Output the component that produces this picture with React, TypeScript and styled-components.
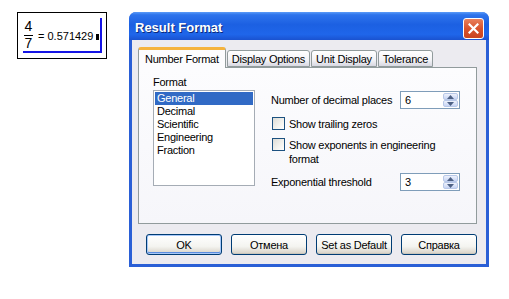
import React from "react";
import styled, { createGlobalStyle } from "styled-components";

const GlobalStyle = createGlobalStyle`
  body {
    margin: 0;
    background: #ffffff;
    font-family: "Liberation Sans", Arial, sans-serif;
    font-size: 11px;
    letter-spacing: -0.25px;
    color: #000000;
  }
`;

const Page = styled.div`
  display: flex;
  align-items: flex-start;
  gap: 22px;
  padding: 12px 0 0 17px;
`;

/* ---------- worksheet expression ---------- */

const ExprBox = styled.div`
  flex: none;
  width: 90px;
  height: 47px;
  border: 1px solid #000000;
  padding: 5px 0 0 5px;
  box-sizing: border-box;
`;

const ExprSelection = styled.div`
  display: flex;
  align-items: center;
  width: 79px;
  height: 35px;
  padding: 1px 0 0 1px;
  box-sizing: border-box;
  border-right: 2px solid #1414e6;
  border-bottom: 2px solid #1414e6;
  font-size: 11px;
  letter-spacing: 0;
  white-space: nowrap;
`;

const Fraction = styled.div`
  flex: none;
  display: flex;
  flex-direction: column;
  align-items: center;
  font-size: 14px;
  line-height: 15px;
  margin-right: 5px;
`;

const FracLine = styled.div`
  width: 9px;
  height: 1px;
  background: #000000;
  margin: 1px 0 0;
`;

const Equation = styled.span`
  margin-top: 2px;
`;

const Cursor = styled.span`
  flex: none;
  display: inline-block;
  width: 3px;
  height: 6px;
  background: #000000;
  margin-left: 3px;
  margin-top: 4px;
`;

/* ---------- dialog window ---------- */

const Window = styled.div`
  width: 360px;
  height: 255px;
  display: flex;
  flex-direction: column;
  background: #2a5fd6;
  border-radius: 7px 7px 0 0;
  box-sizing: border-box;
`;

const TitleBar = styled.div`
  height: 28px;
  flex: none;
  display: flex;
  align-items: center;
  justify-content: space-between;
  padding: 0 5px 0 6px;
  border-radius: 7px 7px 0 0;
  background: linear-gradient(
    180deg,
    #5c9cf8 0%,
    #2e74ec 10%,
    #1c60e2 45%,
    #1f66ea 80%,
    #1a52d0 100%
  );
`;

const Title = styled.span`
  color: #ffffff;
  font-weight: bold;
  font-size: 13px;
  letter-spacing: 0;
  text-shadow: 1px 1px 0 #0b2a7a;
  margin-top: 2px;
`;

const CloseButton = styled.div`
  width: 21px;
  height: 21px;
  box-sizing: border-box;
  border: 1px solid #ffffff;
  border-radius: 3px;
  background: linear-gradient(180deg, #e9805c 0%, #d9532d 50%, #c9431f 100%);
  display: flex;
  align-items: center;
  justify-content: center;
  margin-top: 4px;
`;

const Body = styled.div`
  flex: 1;
  margin: 0 3px 3px 3px;
  background: #ecebf0;
  display: flex;
  flex-direction: column;
  padding: 8px 9px 0 6px;
`;

const TabStrip = styled.div`
  display: flex;
  align-items: flex-end;
  height: 20px;
  position: relative;
  z-index: 1;
  margin-bottom: -1px;
`;

const Tab = styled.div<{ $active?: boolean }>`
  box-sizing: border-box;
  height: ${(p) => (p.$active ? "21px" : "17px")};
  padding: 0 ${(p) => (p.$active ? "6px" : "4px")};
  margin-right: 1px;
  display: flex;
  align-items: center;
  border: 1px solid #919b9c;
  border-bottom: ${(p) => (p.$active ? "none" : "1px solid #919b9c")};
  border-radius: 3px 3px 0 0;
  background: ${(p) =>
    p.$active
      ? "#fcfcfe"
      : "linear-gradient(180deg, #ffffff 0%, #f3f3f6 60%, #d8d8e2 100%)"};
  border-top: ${(p) => (p.$active ? "3px solid #f5b33d" : "1px solid #919b9c")};
  white-space: nowrap;
  margin-bottom: ${(p) => (p.$active ? "0" : "1px")};
`;

const Panel = styled.div`
  height: 157px;
  box-sizing: border-box;
  border: 1px solid #919b9c;
  background: linear-gradient(180deg, #fcfcfe 0%, #f6f6fa 100%);
  display: flex;
  padding: 7px 0 0 14px;
`;

const FormatColumn = styled.div`
  display: flex;
  flex-direction: column;
  width: 104px;
`;

const GroupLabel = styled.div`
  height: 14px;
  line-height: 14px;
  margin-bottom: 1px;
`;

const ListBox = styled.div`
  width: 102px;
  height: 96px;
  box-sizing: border-box;
  border: 1px solid #a5acb5;
  background: #ffffff;
  padding: 1px;
`;

const ListItem = styled.div<{ $selected?: boolean }>`
  height: 13px;
  line-height: 13px;
  padding-left: 2px;
  background: ${(p) => (p.$selected ? "#316ac5" : "transparent")};
  color: ${(p) => (p.$selected ? "#ffffff" : "#000000")};
`;

const Options = styled.div`
  display: flex;
  flex-direction: column;
  margin-left: 14px;
  padding-top: 16px;
  width: 190px;
`;

const FieldRow = styled.div<{ $mt?: number }>`
  display: flex;
  align-items: center;
  justify-content: space-between;
  height: 18px;
  margin-top: ${(p) => p.$mt ?? 0}px;
  padding-right: 1px;
`;

const SpinBox = styled.div`
  width: 60px;
  height: 18px;
  box-sizing: border-box;
  border: 1px solid #7f9db9;
  background: #ffffff;
  display: flex;
  align-items: center;
  justify-content: space-between;
  padding: 0 1px 0 4px;
`;

const SpinButtons = styled.div`
  display: flex;
  flex-direction: column;
  width: 15px;
  height: 14px;
`;

const SpinHalf = styled.div`
  flex: 1;
  box-sizing: border-box;
  border: 1px solid #b8c8e8;
  border-radius: 2px;
  background: linear-gradient(180deg, #eef2fc 0%, #c6d4f4 100%);
  display: flex;
  align-items: center;
  justify-content: center;
`;

const CheckRow = styled.div<{ $mt?: number }>`
  display: flex;
  align-items: flex-start;
  margin-top: ${(p) => p.$mt ?? 0}px;
  line-height: 14px;
`;

const CheckBox = styled.div`
  flex: none;
  width: 13px;
  height: 13px;
  box-sizing: border-box;
  border: 1px solid #1c5180;
  background: linear-gradient(135deg, #dcdcd7 0%, #f3f3ef 60%, #ffffff 100%);
  margin: 0 4px 0 1px;
`;

const ButtonRow = styled.div`
  display: flex;
  gap: 9px;
  padding: 10px 0 0 8px;
`;

const Button = styled.div<{ $default?: boolean }>`
  width: 76px;
  height: 21px;
  box-sizing: border-box;
  border: 1px solid #003c74;
  border-radius: 3px;
  display: flex;
  align-items: center;
  justify-content: center;
  background: linear-gradient(180deg, #ffffff 0%, #f4f4f0 60%, #d6d0c5 100%);
  box-shadow: ${(p) =>
    p.$default
      ? "inset 0 0 0 1px #a8c8f8, inset 0 -1px 0 1px #5a8ce0"
      : "inset 0 -1px 0 0 #c9c6bc"};
  white-space: nowrap;
`;

function Arrow({ up }: { up?: boolean }) {
  return (
    <svg width="7" height="4" viewBox="0 0 7 4">
      <path d={up ? "M0 4 L3.5 0 L7 4 Z" : "M0 0 L3.5 4 L7 0 Z"} fill="#4d6185" />
    </svg>
  );
}

function Spinner({ value }: { value: string }) {
  return (
    <SpinBox>
      <span>{value}</span>
      <SpinButtons>
        <SpinHalf>
          <Arrow up />
        </SpinHalf>
        <SpinHalf>
          <Arrow />
        </SpinHalf>
      </SpinButtons>
    </SpinBox>
  );
}

const formats = ["General", "Decimal", "Scientific", "Engineering", "Fraction"];

export default function App() {
  return (
    <>
      <GlobalStyle />
      <Page>
        <ExprBox>
          <ExprSelection>
            <Fraction>
              <span>4</span>
              <FracLine />
              <span>7</span>
            </Fraction>
            <Equation>= 0.571429</Equation>
            <Cursor />
          </ExprSelection>
        </ExprBox>

        <Window>
          <TitleBar>
            <Title>Result Format</Title>
            <CloseButton>
              <svg width="11" height="11" viewBox="0 0 11 11">
                <path
                  d="M1.5 1.5 L9.5 9.5 M9.5 1.5 L1.5 9.5"
                  stroke="#ffffff"
                  strokeWidth="2.2"
                  strokeLinecap="square"
                />
              </svg>
            </CloseButton>
          </TitleBar>
          <Body>
            <TabStrip>
              <Tab $active>Number Format</Tab>
              <Tab>Display Options</Tab>
              <Tab>Unit Display</Tab>
              <Tab>Tolerance</Tab>
            </TabStrip>
            <Panel>
              <FormatColumn>
                <GroupLabel>Format</GroupLabel>
                <ListBox>
                  {formats.map((f, i) => (
                    <ListItem key={f} $selected={i === 0}>
                      {f}
                    </ListItem>
                  ))}
                </ListBox>
              </FormatColumn>
              <Options>
                <FieldRow>
                  <span>Number of decimal places</span>
                  <Spinner value="6" />
                </FieldRow>
                <CheckRow $mt={8}>
                  <CheckBox />
                  <span>Show trailing zeros</span>
                </CheckRow>
                <CheckRow $mt={7}>
                  <CheckBox />
                  <span>
                    Show exponents in engineering
                    <br />
                    format
                  </span>
                </CheckRow>
                <FieldRow $mt={7}>
                  <span>Exponential threshold</span>
                  <Spinner value="3" />
                </FieldRow>
              </Options>
            </Panel>
            <ButtonRow>
              <Button $default>OK</Button>
              <Button>Отмена</Button>
              <Button>Set as Default</Button>
              <Button>Справка</Button>
            </ButtonRow>
          </Body>
        </Window>
      </Page>
    </>
  );
}
